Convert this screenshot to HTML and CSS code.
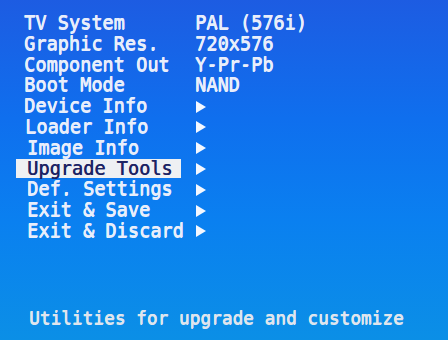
FILE: index.html
```html
<!DOCTYPE html>
<html lang="en">
  <head>
    <meta charset="UTF-8" />
    <meta name="viewport" content="width=device-width, initial-scale=1.0" />
    <title>Setup Menu</title>

    <link rel="stylesheet" href="styles.css">
  </head>
  <body>
    <div class="screen">
      <ul class="menu">
        <li class="row"><span class="label"><span class="text">TV System</span></span><span class="value">PAL (576i)</span></li>
        <li class="row"><span class="label"><span class="text">Graphic Res.</span></span><span class="value">720x576</span></li>
        <li class="row"><span class="label"><span class="text">Component Out</span></span><span class="value">Y-Pr-Pb</span></li>
        <li class="row"><span class="label"><span class="text">Boot Mode</span></span><span class="value">NAND</span></li>
        <li class="row"><span class="label"><span class="text">Device Info</span></span><span class="value"><svg class="arrow" viewBox="0 0 10 12"><path d="M0 0 L10 6 L0 12 Z" /></svg></span></li>
        <li class="row shift-1"><span class="label"><span class="text">Loader Info</span></span><span class="value"><svg class="arrow" viewBox="0 0 10 12"><path d="M0 0 L10 6 L0 12 Z" /></svg></span></li>
        <li class="row shift-2"><span class="label"><span class="text">Image Info</span></span><span class="value"><svg class="arrow" viewBox="0 0 10 12"><path d="M0 0 L10 6 L0 12 Z" /></svg></span></li>
        <li class="row shift-2 selected"><span class="label"><span class="text">Upgrade Tools</span></span><span class="value"><svg class="arrow" viewBox="0 0 10 12"><path d="M0 0 L10 6 L0 12 Z" /></svg></span></li>
        <li class="row shift-2"><span class="label"><span class="text">Def. Settings</span></span><span class="value"><svg class="arrow" viewBox="0 0 10 12"><path d="M0 0 L10 6 L0 12 Z" /></svg></span></li>
        <li class="row shift-2"><span class="label"><span class="text">Exit &amp; Save</span></span><span class="value"><svg class="arrow" viewBox="0 0 10 12"><path d="M0 0 L10 6 L0 12 Z" /></svg></span></li>
        <li class="row shift-2"><span class="label"><span class="text">Exit &amp; Discard</span></span><span class="value"><svg class="arrow" viewBox="0 0 10 12"><path d="M0 0 L10 6 L0 12 Z" /></svg></span></li>
      </ul>

      <!-- Help line for the selected item -->
      <p class="hint">Utilities for upgrade and customize</p>
    </div>
  </body>
</html>
```

FILE: styles.css
```css
/* General Styling */
body {
  margin: 0;
  padding: 0;
  font-family: "DejaVu Sans Mono", "Liberation Mono", monospace;
  color: #e8eefb;
}

.screen {
  width: 448px;
  height: 340px;
  overflow: hidden;
  display: flex;
  flex-direction: column;
  background: linear-gradient(180deg, #1d5ce2 0%, #0f6fee 35%, #0a80f0 65%, #0b8fe6 100%);
}

/* Menu */
.menu {
  list-style: none;
  margin: 0;
  padding: 13px 0 0 24px;
  font-size: 18.6px;
}

.row {
  display: flex;
  align-items: center;
  height: 20.8px;
  line-height: 20.8px;
  white-space: pre;
  text-shadow: 0.5px 0 0 #e8eefb, 0 0.5px 0 #e8eefb;
}

.label {
  flex: none;
  width: 171px;
}

.shift-1 .label {
  padding-left: 1px;
  width: 170px;
}

.shift-2 .label {
  padding-left: 3px;
  width: 168px;
}

.text {
  display: inline-block;
}

.selected .text {
  margin-left: -11px;
  padding: 0 8px 0 11px;
  height: 19px;
  line-height: 19px;
  background-color: #eef0f3;
  color: #1c2364;
  text-shadow: 0.5px 0 0 #1c2364;
}

.value {
  display: flex;
  align-items: center;
}

.arrow {
  flex: none;
  width: 10px;
  height: 12px;
  margin-left: 1px;
  fill: #f4f8ff;
}

/* Help line */
.hint {
  margin: auto 0 0 0;
  padding: 0 0 12px 29px;
  font-size: 17.8px;
  line-height: 20px;
  color: #dfe5ee;
  white-space: pre;
  text-shadow: 0.5px 0 0 #dfe5ee, 0 0.5px 0 #dfe5ee;
}
```
